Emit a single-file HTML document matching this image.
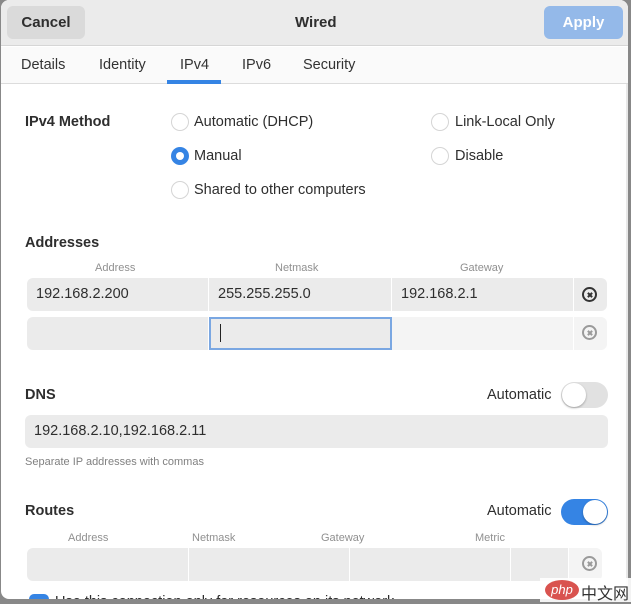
<!DOCTYPE html>
<html><head><meta charset="utf-8"><style>
*{box-sizing:border-box;margin:0;padding:0}
body{width:631px;height:602px;overflow:hidden;background:#888;font-family:"Liberation Sans",sans-serif;color:#2e2e2e;position:relative}
.win{position:absolute;left:1px;top:0;width:627px;height:599px;background:#fff;border-radius:8px;overflow:hidden}
.a{position:absolute;white-space:nowrap}
.hdr{position:absolute;left:0;top:0;width:627px;height:46px;background:#ebebeb;border-bottom:1px solid #d6d6d6}
.btn{position:absolute;top:6px;height:33px;border-radius:6px;font-weight:bold;font-size:15px;text-align:center;line-height:33px}
.tabs{position:absolute;left:0;top:47px;width:627px;height:37px;background:#fafafa;border-bottom:1px solid #dcdcdc}
.tab{position:absolute;top:10px;font-size:14.5px;color:#333}
.rad{position:absolute;width:18px;height:18px;border-radius:50%;border:1.5px solid #d5d5d5;background:#fff}
.rad.on{background:#3584e4;border:none}
.rad.on::after{content:"";position:absolute;left:5px;top:5px;width:8px;height:8px;border-radius:50%;background:#fff}
.lbl{font-size:14.5px;color:#2e2e2e}
.b{font-weight:bold;font-size:14.5px}
.ch{font-size:11px;color:#909090;position:absolute}
.cell{position:absolute;background:#ebebeb;font-size:14.5px;line-height:33px;padding-left:9px}
.x{position:absolute;width:15px;height:15px;border-radius:50%;border:2px solid #333}
.x::before,.x::after{content:"";position:absolute;left:2.5px;top:4.5px;width:6px;height:2px;background:#333;transform:rotate(45deg)}
.x::after{transform:rotate(-45deg)}
.x.l{border-color:#9a9a9a}.x.l::before,.x.l::after{background:#9a9a9a}
.sw{position:absolute;width:47px;height:26px;border-radius:13px}
.knob{position:absolute;top:1px;width:24px;height:24px;border-radius:50%;background:#fff;box-shadow:0 1px 2px rgba(0,0,0,.3)}
</style></head><body>
<div class="win">
<div class="hdr">
<div class="btn" style="left:6px;width:78px;background:#dadada;color:#2e2e2e">Cancel</div>
<div class="a b" style="left:294px;top:14px;font-size:15px">Wired</div>
<div class="btn" style="left:543px;width:79px;background:#94b9e9;color:#fff">Apply</div>
</div>
<div class="tabs">
<div class="tab" style="left:20px">Details</div>
<div class="tab" style="left:98px">Identity</div>
<div class="tab" style="left:179px">IPv4</div>
<div class="tab" style="left:241px">IPv6</div>
<div class="tab" style="left:302px">Security</div>
<div class="a" style="left:166px;top:33px;width:54px;height:4px;background:#3584e4"></div>
</div>

<div class="a b" style="left:24px;top:114px">IPv4 Method</div>
<div class="rad" style="left:170px;top:113px"></div><div class="a lbl" style="left:193px;top:114px">Automatic (DHCP)</div>
<div class="rad on" style="left:170px;top:147px"></div><div class="a lbl" style="left:193px;top:148px">Manual</div>
<div class="rad" style="left:170px;top:181px"></div><div class="a lbl" style="left:193px;top:182px">Shared to other computers</div>
<div class="rad" style="left:430px;top:113px"></div><div class="a lbl" style="left:454px;top:114px">Link-Local Only</div>
<div class="rad" style="left:430px;top:147px"></div><div class="a lbl" style="left:454px;top:148px">Disable</div>

<div class="a b" style="left:24px;top:235px">Addresses</div>
<div class="ch" style="left:94px;top:262px">Address</div>
<div class="ch" style="left:274px;top:262px">Netmask</div>
<div class="ch" style="left:459px;top:262px">Gateway</div>
<div class="cell" style="left:26px;top:278px;width:181px;height:33px;border-radius:6px 0 0 6px">192.168.2.200</div>
<div class="cell" style="left:208px;top:278px;width:182px;height:33px">255.255.255.0</div>
<div class="cell" style="left:391px;top:278px;width:181px;height:33px">192.168.2.1</div>
<div class="cell" style="left:573px;top:278px;width:33px;height:33px;border-radius:0 6px 6px 0"></div>
<div class="x" style="left:581px;top:287px"></div>
<div class="cell" style="left:26px;top:317px;width:181px;height:33px;border-radius:6px 0 0 6px"></div>
<div class="cell" style="left:208px;top:317px;width:183px;height:33px;border:2px solid #7aa7e2;line-height:29px"><span style="display:inline-block;width:1px;height:18px;background:#222;vertical-align:middle"></span></div>
<div class="cell" style="left:391px;top:317px;width:181px;height:33px;background:#f4f4f4"></div>
<div class="cell" style="left:573px;top:317px;width:33px;height:33px;background:#f4f4f4;border-radius:0 6px 6px 0"></div>
<div class="x l" style="left:581px;top:325px"></div>

<div class="a b" style="left:24px;top:387px">DNS</div>
<div class="a lbl" style="left:486px;top:387px">Automatic</div>
<div class="sw" style="left:560px;top:382px;background:#e1e1e1"><div class="knob" style="left:1px"></div></div>
<div class="cell" style="left:24px;top:415px;width:583px;height:33px;border-radius:6px;padding-left:9px">192.168.2.10,192.168.2.11</div>
<div class="a" style="left:24px;top:456px;font-size:11px;color:#808080">Separate IP addresses with commas</div>

<div class="a b" style="left:24px;top:503px">Routes</div>
<div class="a lbl" style="left:486px;top:503px">Automatic</div>
<div class="sw" style="left:560px;top:499px;background:#3584e4"><div class="knob" style="left:22px"></div></div>
<div class="ch" style="left:67px;top:532px">Address</div>
<div class="ch" style="left:191px;top:532px">Netmask</div>
<div class="ch" style="left:320px;top:532px">Gateway</div>
<div class="ch" style="left:474px;top:532px">Metric</div>
<div class="cell" style="left:26px;top:548px;width:161px;height:33px;border-radius:6px 0 0 6px"></div>
<div class="cell" style="left:188px;top:548px;width:160px;height:33px"></div>
<div class="cell" style="left:349px;top:548px;width:160px;height:33px"></div>
<div class="cell" style="left:510px;top:548px;width:57px;height:33px"></div>
<div class="cell" style="left:568px;top:548px;width:33px;height:33px;background:#f4f4f4;border-radius:0 6px 6px 0"></div>
<div class="x l" style="left:581px;top:556px"></div>
<div class="a" style="left:28px;top:594px;width:20px;height:20px;border-radius:5px;background:#3584e4"></div>
<div class="a lbl" style="left:54px;top:594px">Use this connection only for resources on its network</div>
<div class="a" style="left:625px;top:84px;width:2px;height:520px;background:#e8e8e8"></div>
</div>
<div class="a" style="left:540px;top:578px;width:91px;height:24px;background:#fff;opacity:.9"></div>
<div class="a" style="left:545px;top:580px;width:34px;height:20px;border-radius:50%;background:#d9534f;color:#fff;font-size:13px;font-style:italic;text-align:center;line-height:20px">php</div>
<div class="a" style="left:581px;top:580px;font-size:16px;color:#333;font-family:'Liberation Sans','Noto Sans CJK SC',sans-serif">中文网</div>
</body></html>
